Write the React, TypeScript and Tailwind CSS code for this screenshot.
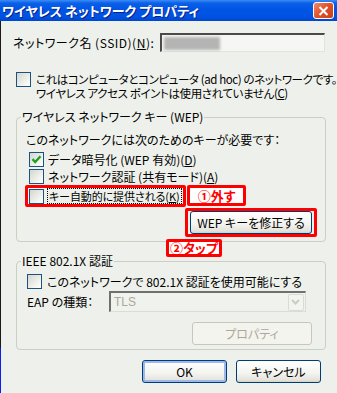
import React from "react";

const jp = "font-['Noto_Sans_CJK_JP',sans-serif] [font-feature-settings:'palt']";

function Check({ checked }: { checked?: boolean }) {
  return (
    <span className="flex h-[15px] w-[15px] shrink-0 items-center justify-center border border-[#1C5180] bg-[linear-gradient(135deg,#D6D6CF_0%,#F4F4F0_70%,#FFFFFF_100%)]">
      {checked && (
        <svg width="13" height="13" viewBox="0 0 13 13">
          <path d="M2.5 6.2 L5.2 9 L10.5 3.2" fill="none" stroke="#21A121" strokeWidth="2.4" />
        </svg>
      )}
    </span>
  );
}

function XpButton({
  children,
  className = "",
  isDefault,
  disabled,
}: {
  children: React.ReactNode;
  className?: string;
  isDefault?: boolean;
  disabled?: boolean;
}) {
  if (disabled) {
    return (
      <div
        className={`flex h-[23px] shrink-0 items-center justify-center rounded-[3px] border border-[#C9C7BA] bg-[#F4F4EE] text-[12px] text-[#ACA899] ${className}`}
      >
        {children}
      </div>
    );
  }
  return (
    <div
      className={`flex h-[23px] shrink-0 items-center justify-center rounded-[3px] border border-[#003C74] bg-[linear-gradient(to_bottom,#FFFFFF_0%,#F3F3EF_60%,#E4E3DC_90%,#D6D2C4_100%)] text-[12px] text-black ${
        isDefault ? "shadow-[inset_0_0_0_2px_#9DB9EB]" : ""
      } ${className}`}
    >
      {children}
    </div>
  );
}

export default function App() {
  return (
    <div className={`h-[393px] w-[337px] overflow-hidden whitespace-nowrap text-[12px] leading-[14px] text-black ${jp}`}>
      {/* title bar */}
      <div className="flex h-[21px] items-start bg-[linear-gradient(to_bottom,#3D8BF5_0%,#0A60E8_15%,#0055E5_45%,#0053E2_80%,#0046CC_100%)]">
        <span className="mt-[2px] ml-[2px] flex-1 text-[13px] font-bold leading-[17px] text-white [text-shadow:1px_1px_0_#0A1E8C]">
          ワイヤレス ネットワーク プロパティ
        </span>
        <div className="mt-[2px] mr-[3px] flex h-[17px] w-[21px] items-center justify-center rounded-[3px] border border-white bg-[linear-gradient(135deg,#F0896A_0%,#E0502A_50%,#C8401C_100%)]">
          <svg width="11" height="10" viewBox="0 0 11 10">
            <path d="M1.5 1 L9.5 9 M9.5 1 L1.5 9" stroke="white" strokeWidth="2" />
          </svg>
        </div>
      </div>

      <div className="flex h-[372px]">
        <div className="flex w-[2px] flex-col">
          <div className="h-[327px] bg-[#1A1A1A]" />
          <div className="flex-1 bg-[#0A1EF0]" />
        </div>

        <div className="flex flex-1 flex-col bg-[#EEF1EB]">
          {/* SSID */}
          <div className="mt-[12px] flex h-[19px] items-center">
            <span className="ml-[12px] w-[147px] tracking-[0.5px]">
              ネットワーク名 (SSID)(<span className="underline">N</span>):
            </span>
            <div className="relative flex h-[19px] w-[165px] items-center border-t-2 border-l-2 border-t-[#4A4A4A] border-l-[#4A4A4A] border-r border-b border-r-[#E2E4DE] border-b-[#E2E4DE] bg-[#F6F7F4]">
              <div className="ml-[2px] h-[13px] w-[56px] bg-[#B4B4B4] blur-[1.5px]" />
            </div>
          </div>

          {/* ad hoc */}
          <div className="mt-[20px] ml-[15px] flex items-start">
            <Check />
            <div className="ml-[5px] text-[11.5px] tracking-[-0.4px]">
              <div>これはコンピュータとコンピュータ (ad hoc) のネットワークです。</div>
              <div>
                ワイヤレス アクセス ポイントは使用されていません(<span className="underline">C</span>)
              </div>
            </div>
          </div>

          {/* WEP group */}
          <fieldset className="relative mt-[10px] ml-[15px] w-[310px] rounded-[4px] border border-[#C9CFC2] pb-[4px]">
            <legend className="ml-[4px] px-[1px] leading-[14px]">ワイヤレス ネットワーク キー (WEP)</legend>
            <div className="mt-[9px] ml-[9px]">このネットワークには次のためのキーが必要です：</div>
            <div className="mt-[5px] ml-[12px] flex h-[15px] items-center">
              <Check checked />
              <span className="ml-[4px]">
                データ暗号化 (WEP 有効)(<span className="underline">D</span>)
              </span>
            </div>
            <div className="mt-[2px] ml-[12px] flex h-[15px] items-center">
              <Check />
              <span className="ml-[4px]">
                ネットワーク認証 (共有モード)(<span className="underline">A</span>)
              </span>
            </div>
            <div className="mt-[1px] ml-[8px] flex items-start">
              <div className="flex h-[22px] w-[161px] shrink-0 items-center rounded-[2px] border-[3px] border-[#FF0000] pl-[1px]">
                <Check />
                <span className="ml-[3px] border border-dotted border-black px-[1px] text-[11px] leading-[14px] tracking-[-0.1px]">
                  キー自動的に提供される(<span className="underline">K</span>)
                </span>
              </div>
              <div className="ml-[1px] flex h-[21px] w-[59px] shrink-0 items-center justify-center rounded-[2px] border-[3px] border-[#FF0000] bg-white text-[13px] font-bold text-[#FF0000]">
                ①外す
              </div>
            </div>
            <div className="mt-[1px] flex justify-end pr-[8px]">
              <div className="shrink-0 rounded-[2px] border-[3px] border-[#FF0000] px-[2px]">
                <XpButton className="w-[122px] text-[12.5px]">WEP キーを修正する</XpButton>
              </div>
            </div>
            <div className="absolute top-[115px] left-[149px] flex h-[18px] w-[56px] items-center justify-center rounded-[2px] border-[3px] border-[#FF0000] bg-white text-[13px] font-bold text-[#FF0000]">
              ②タップ
            </div>
          </fieldset>

          {/* 802.1X group */}
          <fieldset className="mt-[12px] ml-[15px] w-[310px] rounded-[4px] border border-[#C9CFC2] pb-[4px]">
            <legend className="ml-[4px] px-[1px] leading-[14px]">IEEE 802.1X 認証</legend>
            <div className="mt-[6px] ml-[10px] flex h-[15px] items-center">
              <Check />
              <span className="ml-[5px]">このネットワークで 802.1X 認証を使用可能にする</span>
            </div>
            <div className="mt-[2px] ml-[10px] flex h-[21px] items-center">
              <span className="w-[82px]">EAP の種類：</span>
              <div className="flex h-[21px] w-[197px] items-center justify-between border-t-2 border-l-2 border-t-[#707070] border-l-[#707070] border-r border-b border-r-[#DCDCD4] border-b-[#DCDCD4] bg-[#F0F2EE] pl-[3px]">
                <span className="text-[#ACA899] [font-family:'Liberation_Sans',sans-serif]">TLS</span>
                <div className="mr-[1px] flex h-[17px] w-[16px] items-center justify-center rounded-[2px] border border-[#D8DCD6] bg-[#F2F4F0]">
                  <svg width="9" height="6" viewBox="0 0 9 6">
                    <path d="M1 1 L4.5 4.5 L8 1" fill="none" stroke="#C8CCC4" strokeWidth="2" />
                  </svg>
                </div>
              </div>
            </div>
            <div className="mt-[10px] flex justify-end pr-[13px]">
              <XpButton disabled className="w-[120px]">
                プロパティ
              </XpButton>
            </div>
          </fieldset>

          {/* OK / Cancel */}
          <div className="mt-[10px] ml-[141px] flex gap-[9px]">
            <XpButton isDefault className="w-[85px]">
              OK
            </XpButton>
            <XpButton className="w-[85px]">キャンセル</XpButton>
          </div>
        </div>
      </div>
    </div>
  );
}
